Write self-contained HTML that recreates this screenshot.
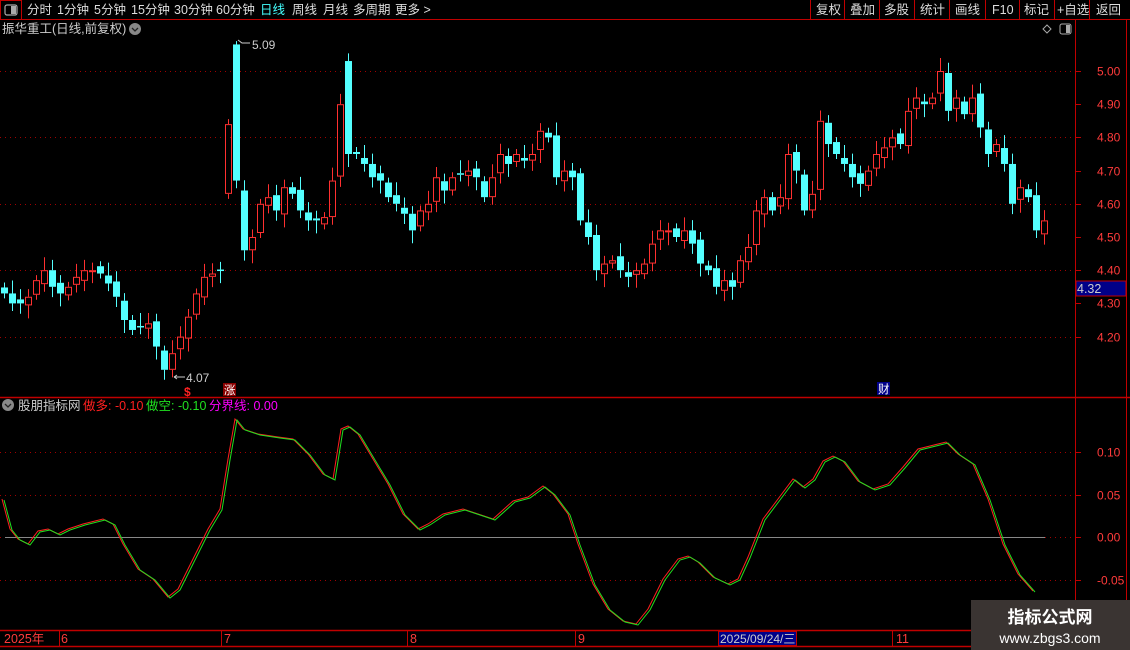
<!DOCTYPE html>
<html><head><meta charset="utf-8"><style>
html,body{margin:0;padding:0;background:#000;width:1130px;height:650px;overflow:hidden;font-family:"Liberation Sans","Noto Sans CJK SC",sans-serif}
svg{display:block}
text{font-family:"Liberation Sans","Noto Sans CJK SC",sans-serif}
</style></head><body>
<svg id="s" width="1130" height="650" xmlns="http://www.w3.org/2000/svg">
<rect width="1130" height="650" fill="#000"/>
<!-- top bar -->
<line x1="0" y1="19.5" x2="1130" y2="19.5" stroke="#c00000"/>
<rect x="0.5" y="0.5" width="21" height="19" fill="none" stroke="#c00000"/>
<rect x="5" y="5" width="12" height="10" rx="2" fill="none" stroke="#aaa" stroke-width="1.2"/>
<rect x="11" y="6" width="5" height="8" fill="#aaa"/>
<g font-size="12.5" fill="#ddd">
<text x="27" y="14">分时</text><text x="57" y="14">1分钟</text><text x="94" y="14">5分钟</text><text x="131" y="14">15分钟</text><text x="174" y="14">30分钟</text><text x="216" y="14">60分钟</text>
<text x="260" y="14" fill="#4ff">日线</text><text x="292" y="14">周线</text><text x="323" y="14">月线</text><text x="353" y="14">多周期</text><text x="395" y="14">更多 &gt;</text>
<text x="816" y="14">复权</text><text x="850" y="14">叠加</text><text x="884" y="14">多股</text><text x="920" y="14">统计</text><text x="955" y="14">画线</text><text x="992" y="14">F10</text><text x="1024" y="14">标记</text><text x="1057" y="14">+自选</text><text x="1096" y="14">返回</text>
</g>
<g stroke="#c00000"><line x1="810.5" y1="0" x2="810.5" y2="19"/><line x1="844.5" y1="0" x2="844.5" y2="19"/><line x1="879.5" y1="0" x2="879.5" y2="19"/><line x1="914.5" y1="0" x2="914.5" y2="19"/><line x1="949.5" y1="0" x2="949.5" y2="19"/><line x1="985.5" y1="0" x2="985.5" y2="19"/><line x1="1019.5" y1="0" x2="1019.5" y2="19"/><line x1="1054.5" y1="0" x2="1054.5" y2="19"/><line x1="1089.5" y1="0" x2="1089.5" y2="19"/></g>
<text x="2" y="33" font-size="12.5" fill="#ccc">振华重工(日线,前复权)</text>
<circle cx="135" cy="29" r="6" fill="#888"/><path d="M132 28l3 3 3-3" stroke="#222" fill="none" stroke-width="1.3"/>
<path d="M1047 25l4 4-4 4-4-4z" fill="none" stroke="#aaa"/>
<rect x="1060" y="24" width="11" height="10" rx="2" fill="none" stroke="#aaa"/><rect x="1066" y="25" width="4" height="8" fill="#aaa"/>
<!-- frames -->
<line x1="1075.5" y1="19" x2="1075.5" y2="630" stroke="#c00000"/>
<line x1="1126.5" y1="19" x2="1126.5" y2="650" stroke="#c00000"/>
<line x1="0" y1="397.5" x2="1130" y2="397.5" stroke="#c00000" stroke-width="1.5"/>
<line x1="0" y1="630.5" x2="1130" y2="630.5" stroke="#c00000" stroke-width="1.5"/>
<line x1="0" y1="646.5" x2="1130" y2="646.5" stroke="#c00000" stroke-width="1.5"/>
<g id="grid" stroke="#a00000" stroke-dasharray="1 4"></g>
<g id="axis" font-size="12" fill="#ff3b3b"></g>
<g id="cand"></g>
<line x1="5" y1="537.5" x2="1045" y2="537.5" stroke="#888"/>
<polyline id="red" fill="none" stroke="#ff2020" stroke-width="1"/>
<polyline id="grn" fill="none" stroke="#20e020" stroke-width="1"/>
<!-- annotations -->
<path d="M238 40l4 3h8" stroke="#ccc" fill="none"/>
<text x="252" y="49" font-size="12" fill="#ccc">5.09</text>
<path d="M174 377l3-2M174 377l3 2M174 377h11" stroke="#ccc" fill="none"/>
<text x="186" y="382" font-size="12" fill="#ccc">4.07</text>
<rect x="223" y="383" width="13" height="13" fill="#800"/><text x="224" y="394" font-size="11.5" fill="#fff">涨</text>
<text x="184" y="396" font-size="12" font-weight="bold" fill="#f22">$</text>
<rect x="877" y="382" width="13" height="13" fill="#00008a"/><text x="878" y="393" font-size="11.5" fill="#fff">财</text>
<rect x="1076" y="281" width="50" height="15" fill="#000088" stroke="#c00000"/>
<text x="1077" y="293" font-size="12.5" fill="#ccc">4.32</text>
<!-- indicator title -->
<circle cx="8" cy="405" r="6" fill="#888"/><path d="M5 404l3 3 3-3" stroke="#222" fill="none" stroke-width="1.3"/>
<text x="18" y="410" font-size="12.5" fill="#ccc">股朋指标网</text>
<text x="83" y="410" font-size="12.5" fill="#ff2020">做多: -0.10</text>
<text x="146" y="410" font-size="12.5" fill="#20e020">做空: -0.10</text>
<text x="209" y="410" font-size="12.5" fill="#f0f">分界线: 0.00</text>
<!-- dates -->
<g font-size="12.5" fill="#ff3b3b">
<text x="4" y="643">2025年</text><text x="61" y="643">6</text><text x="224" y="643">7</text><text x="410" y="643">8</text><text x="578" y="643">9</text><text x="896" y="643">11</text>
</g>
<g stroke="#c00000"><line x1="59.5" y1="631" x2="59.5" y2="646"/><line x1="221.5" y1="631" x2="221.5" y2="646"/><line x1="407.5" y1="631" x2="407.5" y2="646"/><line x1="575.5" y1="631" x2="575.5" y2="646"/><line x1="892.5" y1="631" x2="892.5" y2="646"/></g>
<rect x="718.5" y="631.5" width="78" height="14" fill="#000088" stroke="#c00000"/>
<text x="720" y="643" font-size="12" fill="#ccc">2025/09/24/三</text>
<rect x="971" y="600" width="159" height="50" fill="#3a3432"/>
<text x="1050" y="623" font-size="17" font-weight="bold" fill="#fff" text-anchor="middle">指标公式网</text>
<text x="1050" y="643" font-size="14" fill="#fff" text-anchor="middle">www.zbgs3.com</text>
</svg>
<script>
var NS="http://www.w3.org/2000/svg";
function el(p,t,a,txt){var e=document.createElementNS(NS,t);for(var k in a)e.setAttribute(k,a[k]);if(txt)e.textContent=txt;document.getElementById(p).appendChild(e);return e;}
function py(p){return 71+(5.00-p)*332;}
function iy(v){return 537-v*850;}
// grid & axis
[5.0,4.9,4.8,4.7,4.6,4.5,4.4,4.3,4.2].forEach(function(p,i){var y=Math.round(py(p))+.5;
 if(i%2==0)el("grid","line",{x1:0,y1:y,x2:1075,y2:y});
 el("axis","line",{x1:1076,y1:y,x2:1081,y2:y,stroke:"#c00000"});
 el("axis","text",{x:1097,y:y+4},p.toFixed(2));});
[0.1,0.05,0,-0.05].forEach(function(v){var y=Math.round(iy(v))+.5;
 el("grid","line",{x1:0,y1:y,x2:1075,y2:y});
 el("axis","line",{x1:1076,y1:y,x2:1081,y2:y,stroke:"#c00000"});
 el("axis","text",{x:1097,y:y+4},v.toFixed(2));});
// candles
var c=[4.33,4.30,4.30,4.32,4.37,4.40,4.35,4.33,4.35,4.38,4.40,4.40,4.39,4.36,4.32,4.25,4.22,4.23,4.24,4.17,4.10,4.15,4.20,4.26,4.33,4.38,4.39,4.40,4.84,4.67,4.46,4.50,4.60,4.62,4.58,4.65,4.63,4.58,4.55,4.55,4.56,4.67,4.90,4.75,4.75,4.72,4.68,4.67,4.62,4.60,4.57,4.52,4.58,4.60,4.68,4.64,4.68,4.69,4.70,4.68,4.62,4.68,4.75,4.72,4.75,4.73,4.75,4.82,4.80,4.68,4.70,4.68,4.55,4.50,4.40,4.42,4.43,4.40,4.38,4.40,4.42,4.48,4.52,4.52,4.50,4.52,4.48,4.42,4.40,4.35,4.37,4.35,4.43,4.47,4.58,4.62,4.58,4.62,4.75,4.70,4.58,4.63,4.85,4.78,4.75,4.72,4.68,4.66,4.70,4.75,4.77,4.80,4.78,4.88,4.92,4.90,4.92,5.00,4.88,4.92,4.87,4.92,4.83,4.75,4.78,4.72,4.60,4.65,4.62,4.52,4.55];
var ov={28:4.63,29:5.08,43:5.03,30:4.64};
var prev=4.36;
for(var i=0;i<c.length;i++){var x=i*8+1;var o=ov[i]!==undefined?ov[i]:prev+((i*7)%5-2)*0.006;var cl=c[i];
 var hi=Math.max(o,cl)+0.015+((i*3)%4)*0.008,lo=Math.min(o,cl)-0.015-((i*5)%4)*0.008;
 if(i==29)hi=5.09;if(i==20)lo=4.07;
 var up=cl>=o,col=up?"#ff3030":"#54ffff";
 var yt=py(Math.max(o,cl)),yb=py(Math.min(o,cl));if(yb-yt<1.5)yb=yt+1.5;
 el("cand","line",{x1:x+3.5,y1:py(hi),x2:x+3.5,y2:yt,stroke:col});
 el("cand","line",{x1:x+3.5,y1:yb,x2:x+3.5,y2:py(lo),stroke:col});
 if(up)el("cand","rect",{x:x+.5,y:yt+.5,width:6,height:Math.max(1,yb-yt-1),fill:"none",stroke:col});
 else el("cand","rect",{x:x,y:yt,width:7,height:yb-yt,fill:col});
 prev=cl;}
// indicator
var pts=[[4,500],[12,530],[20,540],[30,545],[40,532],[50,530],[60,535],[70,530],[85,525],[105,520],[115,525],[125,545],[140,570],[155,580],[170,598],[180,590],[195,560],[210,530],[222,510],[230,460],[237,420],[245,430],[260,435],[280,438],[295,440],[310,455],[325,475],[335,480],[343,430],[350,427],[360,435],[375,460],[390,485],[405,515],[420,530],[430,525],[445,515],[465,510],[480,515],[495,520],[515,502],[530,498],[545,487],[555,495],[570,515],[580,545],[595,585],[610,610],[625,622],[638,625],[650,610],[665,580],[680,560],[690,557],[700,563],[715,578],[730,585],[740,580],[750,558],[765,520],[780,500],[795,480],[805,488],[815,480],[825,462],[835,457],[845,462],[860,482],[875,490],[890,485],[905,468],[920,450],[940,445],[948,443],[960,455],[975,465],[990,500],[1005,545],[1020,575],[1035,592]];
document.getElementById("red").setAttribute("points",pts.map(function(p){return (p[0]-2)+","+(p[1]-1)}).join(" "));
document.getElementById("grn").setAttribute("points",pts.map(function(p){return p[0]+","+p[1]}).join(" "));
</script>
</body></html>
